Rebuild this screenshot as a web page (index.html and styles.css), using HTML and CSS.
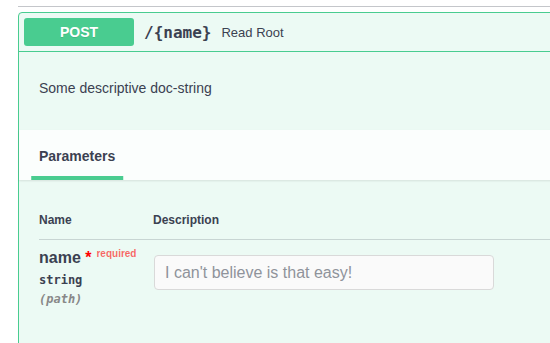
FILE: index.html
```html
<!DOCTYPE html>
<html lang="en">
<head>
    <meta charset="UTF-8">
    <meta name="viewport" content="width=device-width, initial-scale=1.0">
    <title>Read Root</title>
    <link rel="stylesheet" href="styles.css">
</head>
<body>
    <div class="page">
        <div class="tag-line"></div>
        <div class="opblock">
            <div class="opblock-summary">
                <span class="method">POST</span>
                <span class="path">/{name}</span>
                <span class="summary-desc">Read Root</span>
            </div>
            <div class="description">Some descriptive doc-string</div>
            <div class="section-header">
                <h4 class="tab">Parameters</h4>
            </div>
            <div class="table-wrap">
                <div class="param-head">
                    <div>Name</div>
                    <div>Description</div>
                </div>
                <div class="param-row">
                    <div class="param-col">
                        <div class="param-name">name<span class="star">&nbsp;*</span><sup class="req">required</sup></div>
                        <div class="param-type">string</div>
                        <div class="param-in">(path)</div>
                    </div>
                    <div class="param-col">
                        <input type="text" class="param-input" placeholder="I can't believe is that easy!">
                    </div>
                </div>
            </div>
        </div>
    </div>
</body>
</html>
```

FILE: styles.css
```css
* {
    margin: 0;
    padding: 0;
    box-sizing: border-box;
}

body {
    font-family: "Liberation Sans", Arial, sans-serif;
    color: #3b4151;
    background-color: #fff;
    overflow: hidden;
}

.page {
    width: 660px;
    padding-left: 18px;
}

.tag-line {
    height: 7px;
    border-bottom: 1px solid rgba(59, 65, 81, 0.3);
    margin-bottom: 5px;
}

.opblock {
    border: 1px solid #49cc90;
    border-radius: 4px;
    background-color: rgba(73, 204, 144, 0.1);
    height: 400px;
}

.opblock-summary {
    display: flex;
    align-items: center;
    padding: 5px;
    border-bottom: 1px solid #49cc90;
}

.method {
    width: 110px;
    height: 28px;
    display: flex;
    align-items: center;
    justify-content: center;
    background-color: #49cc90;
    color: #fff;
    font-size: 14px;
    font-weight: bold;
    border-radius: 3px;
    text-shadow: 0 1px 0 rgba(0, 0, 0, 0.1);
}

.path {
    padding: 0 10px;
    font-family: "DejaVu Sans Mono", monospace;
    font-size: 16px;
    font-weight: bold;
}

.summary-desc {
    font-size: 13px;
}

.description {
    padding: 26px 20px 32px;
    font-size: 14px;
    line-height: 20px;
}

.section-header {
    height: 50px;
    padding: 0 20px;
    display: flex;
    align-items: center;
    background-color: rgba(255, 255, 255, 0.8);
    box-shadow: 0 1px 2px rgba(0, 0, 0, 0.1);
}

.tab {
    position: relative;
    font-size: 14px;
    line-height: 17px;
    margin-top: 2px;
}

.tab::after {
    content: "";
    position: absolute;
    left: 50%;
    bottom: -15px;
    width: 120%;
    height: 4px;
    transform: translateX(-50%);
    background-color: #49cc90;
}

.table-wrap {
    padding: 20px 0 0 20px;
}

.param-head {
    display: grid;
    grid-template-columns: 114px 1fr;
    padding: 13px 0 12px;
    font-size: 12px;
    line-height: 14px;
    font-weight: bold;
    border-bottom: 1px solid rgba(59, 65, 81, 0.2);
}

.param-row {
    display: grid;
    grid-template-columns: 115px 1fr;
    padding: 10px 0;
}

.param-name {
    height: 18px;
    font-size: 16px;
    line-height: 16px;
    font-weight: bold;
    white-space: nowrap;
}

.star {
    color: red;
}

.req {
    font-size: 10px;
    line-height: 0;
    font-weight: bold;
    color: rgba(255, 0, 0, 0.6);
    padding-left: 5px;
    vertical-align: 6px;
}

.param-type {
    padding: 5px 0;
    font-family: "DejaVu Sans Mono", monospace;
    font-size: 12px;
    line-height: 14px;
    font-weight: bold;
}

.param-in {
    font-family: "DejaVu Sans Mono", monospace;
    font-size: 12px;
    line-height: 14px;
    font-style: italic;
    font-weight: bold;
    color: #888;
}

.param-input {
    width: 340px;
    height: 35px;
    margin-top: 5px;
    padding: 0 10px;
    border: 1px solid #d9d9d9;
    border-radius: 4px;
    background-color: #fafafa;
    font-family: "Liberation Sans", Arial, sans-serif;
    font-size: 16px;
    color: #3b4151;
}

.param-input::placeholder {
    color: #8f939b;
}
```
